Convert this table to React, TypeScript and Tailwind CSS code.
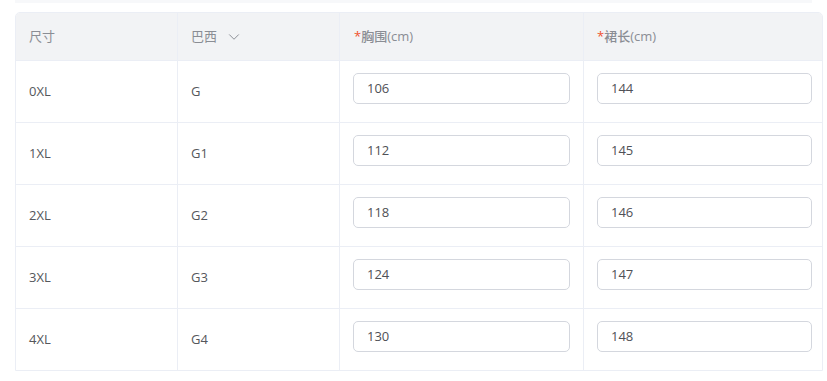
import { ChevronDown } from "lucide-react";

const rows = [
  { size: "0XL", br: "G", chest: "106", len: "144" },
  { size: "1XL", br: "G1", chest: "112", len: "145" },
  { size: "2XL", br: "G2", chest: "118", len: "146" },
  { size: "3XL", br: "G3", chest: "124", len: "147" },
  { size: "4XL", br: "G4", chest: "130", len: "148" },
];

const font = {
  fontFamily: '"Open Sans", "Noto Sans CJK SC", sans-serif',
};

function Cell({ children, last }: { children: React.ReactNode; last?: boolean }) {
  return (
    <div
      className={`flex h-[62px] items-center border-t border-[#ebeef5] pl-[13px] text-[13px] text-[#55575c] ${
        last ? "" : "border-r"
      }`}
    >
      {children}
    </div>
  );
}

function InputCell({ value, last }: { value: string; last?: boolean }) {
  return (
    <div
      className={`h-[62px] border-t border-[#ebeef5] pt-[12px] pl-[13px] ${
        last ? "pr-[10px]" : "border-r pr-[13px]"
      }`}
    >
      <div className="flex h-[31px] items-center rounded-[5px] border border-[#d4d7de] bg-white px-[13px] text-[13px] text-[#4f5156]">
        {value}
      </div>
    </div>
  );
}

export default function App() {
  return (
    <div className="h-[381px] w-[827px] bg-white" style={font}>
      <div className="mx-[15px] h-[3px] bg-[#f7f8fa]" />
      <div className="pt-[9px] pl-[15px] pr-[4px]">
        <div className="grid grid-cols-[162px_162px_244px_1fr] overflow-hidden rounded-t-[5px] border border-[#ebeef5]">
          <div className="flex h-[47px] items-center border-r border-[#ebeef5] bg-[#f2f3f5] pl-[13px] text-[13px] text-[#8a8d94]">
            尺寸
          </div>
          <div className="flex h-[47px] items-center gap-[8px] border-r border-[#ebeef5] bg-[#f2f3f5] pl-[13px] text-[13px] text-[#8a8d94]">
            巴西
            <ChevronDown size={18} strokeWidth={1.3} className="text-[#8a8d94]" />
          </div>
          <div className="flex h-[47px] items-center border-r border-[#ebeef5] bg-[#f2f3f5] pl-[14px] text-[13px] font-medium text-[#8a8d94]">
            <span className="text-[#f0522d]">*</span>胸围(cm)
          </div>
          <div className="flex h-[47px] items-center bg-[#f2f3f5] pl-[13px] text-[13px] font-medium text-[#8a8d94]">
            <span className="text-[#f0522d]">*</span>裙长(cm)
          </div>
          {rows.map((r) => (
            <div key={r.size} className="contents">
              <Cell>{r.size}</Cell>
              <Cell>{r.br}</Cell>
              <InputCell value={r.chest} />
              <InputCell value={r.len} last />
            </div>
          ))}
        </div>
      </div>
    </div>
  );
}
